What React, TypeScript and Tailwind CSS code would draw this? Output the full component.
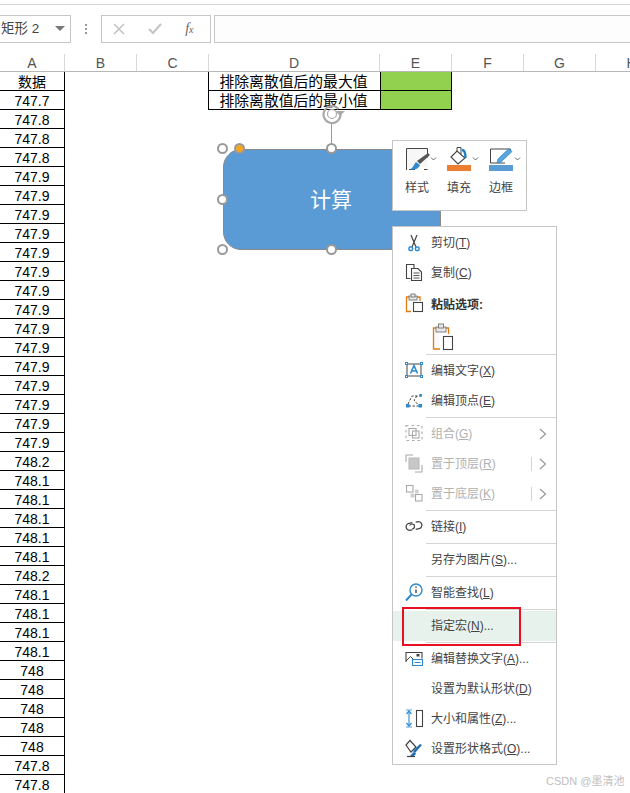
import { ReactNode } from "react";

const font = { cjk: "font-['Liberation_Sans','Noto_Sans_CJK_SC',sans-serif]" };

const values = [
  "747.7", "747.8", "747.8", "747.8",
  "747.9", "747.9", "747.9", "747.9", "747.9", "747.9", "747.9", "747.9",
  "747.9", "747.9", "747.9", "747.9", "747.9", "747.9", "747.9",
  "748.2", "748.1", "748.1", "748.1", "748.1", "748.1", "748.2",
  "748.1", "748.1", "748.1", "748.1",
  "748", "748", "748", "748", "748", "747.8", "747.8",
];

const columns = [
  { name: "A", width: "w-[65px]" },
  { name: "B", width: "w-[72px]" },
  { name: "C", width: "w-[72px]" },
  { name: "D", width: "w-[171px]" },
  { name: "E", width: "w-[72px]" },
  { name: "F", width: "w-[72px]" },
  { name: "G", width: "w-[72px]" },
  { name: "H", width: "w-[72px]" },
];

const Svg = ({ children, w = 24, h = 24 }: { children: ReactNode; w?: number; h?: number }) => (
  <svg width={w} height={h} viewBox={`0 0 ${w} ${h}`} fill="none" className="shrink-0">
    {children}
  </svg>
);

const dark = "#444444";
const blue = "#2f8ad0";
const orange = "#e47911";

const icons: Record<string, ReactNode> = {
  cut: (
    <Svg>
      <path d="M9 4l5 12M15 4l-5 12" stroke={dark} strokeWidth="1.2" />
      <rect x="7" y="16" width="3.5" height="3.5" rx="1" stroke={blue} strokeWidth="1.5" />
      <rect x="13.5" y="16" width="3.5" height="3.5" rx="1" stroke={blue} strokeWidth="1.5" />
    </Svg>
  ),
  copy: (
    <Svg>
      <path d="M8.5 17.5H4.5V3.5H12V7" stroke={dark} strokeWidth="1.1" />
      <path d="M9.5 7.5H16l3.5 3.5v8.5h-10z" fill="#fafafa" stroke={dark} strokeWidth="1.1" />
      <path d="M11.5 12h6M11.5 14.5h6M11.5 17h6" stroke={dark} strokeWidth="0.9" />
    </Svg>
  ),
  paste: (
    <Svg>
      <path d="M9 5H4.5v14.5H9" stroke={orange} strokeWidth="1.3" />
      <path d="M15 5h3v4" stroke={orange} strokeWidth="1.3" />
      <rect x="7" y="4" width="8" height="4" fill="#e8e8e8" stroke="#777" strokeWidth="0.9" />
      <rect x="9" y="2" width="4" height="3" fill="#e8e8e8" stroke="#777" strokeWidth="0.9" />
      <rect x="11.5" y="10.5" width="9" height="9" fill="#fff" stroke={dark} strokeWidth="1.1" />
    </Svg>
  ),
  text: (
    <Svg>
      <rect x="5" y="5" width="14" height="12" fill="#fff" stroke={dark} strokeWidth="1" />
      <g fill="#fff" stroke={blue} strokeWidth="1">
        <rect x="3.5" y="3.5" width="2" height="2" />
        <rect x="18.5" y="3.5" width="2" height="2" />
        <rect x="3.5" y="16.5" width="2" height="2" />
        <rect x="18.5" y="16.5" width="2" height="2" />
      </g>
      <path d="M8.5 14.5l3.5-8 3.5 8M9.7 12h4.6" stroke={blue} strokeWidth="1.6" />
    </Svg>
  ),
  points: (
    <Svg>
      <path d="M6 15l4-8h9M15 7l-3 4 3.5 4M17 17H7" stroke={dark} strokeWidth="1" strokeDasharray="2.5 1.5" />
      <g fill={blue}>
        <rect x="4" y="15" width="3.5" height="3.5" />
        <rect x="17.5" y="5" width="2.5" height="2.5" />
        <rect x="16.5" y="15" width="3.5" height="3.5" />
      </g>
    </Svg>
  ),
  group: (
    <Svg>
      <rect x="4" y="3.5" width="16" height="15" stroke="#aaa" strokeWidth="1.1" strokeDasharray="2.5 3" />
      <rect x="7" y="6.5" width="7" height="7" stroke="#aaa" strokeWidth="1.1" />
      <rect x="10.5" y="9" width="6.5" height="7" stroke="#aaa" strokeWidth="1.1" />
    </Svg>
  ),
  front: (
    <Svg>
      <path d="M4 10V3h7M20 13v7h-7" stroke="#aaa" strokeWidth="1.1" />
      <rect x="7" y="6" width="10" height="11" fill="#c8c8c8" stroke="#b8b8b8" />
    </Svg>
  ),
  back: (
    <Svg>
      <rect x="4.5" y="3.5" width="6.5" height="6.5" stroke="#aaa" strokeWidth="1.1" />
      <rect x="13.5" y="12.5" width="6.5" height="6.5" stroke="#aaa" strokeWidth="1.1" />
      <rect x="8.5" y="11.5" width="4" height="4" fill="#cfcfcf" />
      <rect x="13" y="7.5" width="3.5" height="4" fill="#cfcfcf" />
    </Svg>
  ),
  link: (
    <Svg>
      <path d="M11 8H7.5a3.5 3.5 0 0 0 0 7h2" stroke={dark} strokeWidth="1.3" transform="rotate(-12 9 11)" />
      <path d="M13 14h3.5a3.5 3.5 0 0 0 0-7h-2" stroke={dark} strokeWidth="1.3" transform="rotate(-12 15 11)" />
      <path d="M7.5 10.5c2-2.5 5-1.5 5 .5s-1 3-2.5 3" stroke={dark} strokeWidth="1.2" />
    </Svg>
  ),
  search: (
    <Svg>
      <circle cx="14" cy="9" r="6" fill="#fff" stroke={blue} strokeWidth="1.4" />
      <path d="M9.5 13.5L4 19.5" stroke={blue} strokeWidth="2" />
      <path d="M14 8.5v3.5" stroke={dark} strokeWidth="1.4" />
      <rect x="13.3" y="5.5" width="1.4" height="1.4" fill={dark} />
    </Svg>
  ),
  alt: (
    <Svg>
      <path d="M4 15V5.5h16v6" stroke={dark} strokeWidth="1.1" />
      <path d="M4 14l4.5-4.5L13 14" stroke={dark} strokeWidth="1" />
      <rect x="14.5" y="7" width="3" height="2.5" fill={dark} />
      <rect x="10.5" y="12.5" width="10" height="6" fill="#fff" stroke={blue} strokeWidth="1.1" />
      <path d="M12.5 15.5h6" stroke={blue} />
    </Svg>
  ),
  size: (
    <Svg>
      <path d="M7 5v13" stroke={blue} strokeWidth="1.1" />
      <path d="M4.5 7L7 4l2.5 3M4.5 16L7 19l2.5-3" stroke={blue} strokeWidth="1.2" />
      <path d="M4 3h6M4 20h6" stroke={blue} strokeWidth="0.8" />
      <rect x="14.5" y="3.5" width="6" height="16" stroke={dark} strokeWidth="1.1" />
    </Svg>
  ),
  format: (
    <Svg>
      <path d="M4 8l4-4.5 6 6.5-5 5z" fill="#fff" stroke={dark} strokeWidth="1.2" />
      <path d="M20 8l-7 8-2-2 7-7z" fill="#1f6fb5" />
      <path d="M12 15c-2 .5-2 3-4 3.5 2 1.5 5 .5 6-2z" fill="#1f6fb5" />
      <path d="M5 19.5h8" stroke={dark} strokeWidth="1.2" />
    </Svg>
  ),
};

type MenuRow =
  | { kind: "sep" }
  | {
      kind: "item";
      icon?: string;
      label: string;
      hotkey: string;
      suffix?: string;
      disabled?: boolean;
      sub?: boolean;
      split?: boolean;
      active?: boolean;
    };

const afterPaste: MenuRow[] = [
  { kind: "sep" },
  { kind: "item", icon: "text", label: "编辑文字", hotkey: "X" },
  { kind: "item", icon: "points", label: "编辑顶点", hotkey: "E" },
  { kind: "sep" },
  { kind: "item", icon: "group", label: "组合", hotkey: "G", disabled: true, sub: true },
  { kind: "item", icon: "front", label: "置于顶层", hotkey: "R", disabled: true, sub: true, split: true },
  { kind: "item", icon: "back", label: "置于底层", hotkey: "K", disabled: true, sub: true, split: true },
  { kind: "sep" },
  { kind: "item", icon: "link", label: "链接", hotkey: "I" },
  { kind: "sep" },
  { kind: "item", label: "另存为图片", hotkey: "S", suffix: "..." },
  { kind: "sep" },
  { kind: "item", icon: "search", label: "智能查找", hotkey: "L" },
  { kind: "sep" },
  { kind: "item", label: "指定宏", hotkey: "N", suffix: "...", active: true },
  { kind: "sep" },
  { kind: "item", icon: "alt", label: "编辑替换文字", hotkey: "A", suffix: "..." },
  { kind: "item", label: "设置为默认形状", hotkey: "D" },
  { kind: "item", icon: "size", label: "大小和属性", hotkey: "Z", suffix: "..." },
  { kind: "item", icon: "format", label: "设置形状格式", hotkey: "O", suffix: "..." },
];

const Separator = () => (
  <div className="flex h-[3px] items-center pl-[33px]">
    <div className="h-px w-full bg-[#d4d4d4]" />
  </div>
);

const Row = ({ row }: { row: Extract<MenuRow, { kind: "item" }> }) => (
  <div
    className={`flex h-[30px] items-center pl-[9px] text-[12px] ${
      row.disabled ? "text-[#b1b1b1]" : "text-[#444444]"
    } ${row.active ? "bg-[#e8f2ec]" : ""}`}
  >
    <div className="h-6 w-6 shrink-0">{row.icon ? icons[row.icon] : null}</div>
    <span className="ml-[5px] whitespace-nowrap">
      {row.label}(<span className="underline">{row.hotkey}</span>){row.suffix}
    </span>
    {row.sub && (
      <div className="ml-auto flex items-center">
        {row.split && <div className="mr-[6px] h-[14px] w-px bg-[#d4d4d4]" />}
        <svg width="10" height="12" viewBox="0 0 10 12" fill="none" className="mr-[8px]">
          <path d="M2 1l5.5 5L2 11" stroke="#999" strokeWidth="1.2" />
        </svg>
      </div>
    )}
  </div>
);

const ContextMenu = () => (
  <div className={`absolute left-[392px] top-[226px] w-[165px] border border-[#c6c6c6] bg-white pt-px ${font.cjk}`}>
    <Row row={{ kind: "item", icon: "cut", label: "剪切", hotkey: "T" }} />
    <Row row={{ kind: "item", icon: "copy", label: "复制", hotkey: "C" }} />
    <div className="flex h-[32px] items-center pl-[9px] text-[12px] font-bold text-[#333333]">
      <div className="h-6 w-6 shrink-0">{icons.paste}</div>
      <span className="ml-[5px] pt-[2px]">粘贴选项:</span>
    </div>
    <div className="flex h-[33px] items-center pl-[38px]">
      <svg width="24" height="28" viewBox="0 0 24 28" fill="none">
        <path d="M8 5H2.5v21H9" stroke={orange} strokeWidth="1.3" fill="#fafafa" />
        <path d="M14 5h3.5v6" stroke={orange} strokeWidth="1.3" />
        <rect x="5" y="4" width="10" height="5" fill="#e8e8e8" stroke="#777" strokeWidth="0.9" />
        <rect x="7.5" y="1" width="5" height="4" fill="#e8e8e8" stroke="#777" strokeWidth="0.9" />
        <rect x="12.5" y="13.5" width="9" height="13" fill="#fff" stroke={dark} strokeWidth="1.1" />
      </svg>
    </div>
    {afterPaste.map((row, i) => (row.kind === "sep" ? <Separator key={i} /> : <Row key={i} row={row} />))}
  </div>
);

const MiniToolbar = () => (
  <div className={`absolute left-[392px] top-[140px] flex h-[71px] w-[135px] border border-[#c6c6c6] bg-white px-[3px] pt-[4px] text-[12px] text-[#444444] ${font.cjk}`}>
    <div className="flex w-[42px] flex-col items-center">
      <Svg w={42} h={30}>
        <path d="M10.5 3.5h21V22H16l-5.5 3z" fill="#f7f7f7" />
        <path d="M10.5 25V3.5h21v9M13 24.5h6M28 24.5h3.5" stroke={dark} strokeWidth="1" />
        <path d="M21 16l11-8 2 2-10 9z" fill="#555" />
        <path d="M20 17c-2 2-2 5-6 7.5 4 1 8 0 10-4.5z" fill={blue} />
        <path d="M35 12.5l2.5 2.5 2.5-2.5" stroke="#666" />
      </Svg>
      <span className="mt-[4px]">样式</span>
    </div>
    <div className="flex w-[42px] flex-col items-center">
      <Svg w={42} h={30}>
        <path d="M13 12l6-6 8 7-7 6z" fill="#fff" stroke={dark} strokeWidth="1.1" />
        <path d="M19 7V2.5h4V9" stroke={dark} strokeWidth="1" />
        <path d="M24 5c3 0 3.5 3 3.5 8" stroke="#1f7fc4" strokeWidth="2.4" />
        <rect x="9" y="20" width="24" height="6" fill="#ed7d31" />
        <path d="M35 12.5l2.5 2.5 2.5-2.5" stroke="#666" />
      </Svg>
      <span className="mt-[4px]">填充</span>
    </div>
    <div className="flex w-[42px] flex-col items-center">
      <Svg w={42} h={30}>
        <path d="M25 18H10.5V4h20v3" stroke={dark} strokeWidth="1" />
        <path d="M17 18l1-4L29 3.5l3 3L21 17z" fill="#5aa5dc" stroke={blue} strokeWidth="0.8" />
        <rect x="9" y="20" width="24" height="6" fill="#5b9bd5" />
        <path d="M35 12.5l2.5 2.5 2.5-2.5" stroke="#666" />
      </Svg>
      <span className="mt-[4px]">边框</span>
    </div>
  </div>
);

const Handle = ({ pos, orangeDot }: { pos: string; orangeDot?: boolean }) => (
  <div
    className={`absolute h-[11px] w-[11px] rounded-full border-2 border-[#999999] ${
      orangeDot ? "bg-[#f5a623]" : "bg-white"
    } ${pos}`}
  />
);

const Shape = () => (
  <>
    <div className={`absolute left-[223px] top-[149px] flex h-[101px] w-[218px] items-center justify-center rounded-[18px] border border-[#8a8a8a] bg-[#5b9bd5] text-[21px] text-white ${font.cjk}`}>
      <span className="mr-[2px]">计算</span>
    </div>
    <div className="absolute left-[331px] top-[122px] h-[22px] w-px bg-[#999999]" />
    <svg width="28" height="22" viewBox="0 0 28 22" fill="none" className="absolute left-[320px] top-[103px]">
      <path d="M18.5 6A8.5 8.5 0 1 0 20.5 11" stroke="#aaaaaa" strokeWidth="2.2" />
      <circle cx="12" cy="11" r="4.5" stroke="#aaaaaa" strokeWidth="1.2" />
      <path d="M15.5 8h9.5l-5 5z" fill="#aaaaaa" />
    </svg>
    <Handle pos="left-[217px] top-[143px]" />
    <Handle pos="left-[234px] top-[143px]" orangeDot />
    <Handle pos="left-[326px] top-[143px]" />
    <Handle pos="left-[217px] top-[194px]" />
    <Handle pos="left-[217px] top-[244px]" />
    <Handle pos="left-[326px] top-[244px]" />
  </>
);

export default function App() {
  return (
    <div className={`relative h-[793px] w-[630px] overflow-hidden bg-white ${font.cjk}`}>
      <div className="h-[5px] border-b border-[#d6d6d6]" />

      {/* formula bar */}
      <div className="mt-[10px] flex h-[28px] text-[#444444]">
        <div className="flex w-[71px] items-center overflow-hidden border-y border-r border-[#c6c6c6] pr-[5px]">
          <span className="ml-[-26px] whitespace-nowrap text-[13.5px]">圆角矩形 2</span>
          <svg width="10" height="6" viewBox="0 0 10 6" className="ml-auto">
            <path d="M0 0h10L5 5z" fill="#777777" />
          </svg>
        </div>
        <div className="flex w-[30px] flex-col items-center justify-center gap-[2px]">
          <div className="h-[2px] w-[2px] bg-[#999999]" />
          <div className="h-[2px] w-[2px] bg-[#999999]" />
          <div className="h-[2px] w-[2px] bg-[#999999]" />
        </div>
        <div className="flex w-[110px] items-center justify-around border border-[#c6c6c6] pr-[5px]">
          <svg width="12" height="12" viewBox="0 0 12 12" fill="none">
            <path d="M1 1l10 10M11 1L1 11" stroke="#c4c4c4" strokeWidth="1.6" />
          </svg>
          <svg width="14" height="12" viewBox="0 0 14 12" fill="none">
            <path d="M1 6l4 4 8-9" stroke="#c4c4c4" strokeWidth="2" />
          </svg>
          <span className="font-['Liberation_Serif',serif] text-[14px] italic leading-none text-[#666666]">
            f<span className="text-[10px]">x</span>
          </span>
        </div>
        <div className="ml-[3px] flex-1 border-y border-l border-[#c6c6c6] bg-[#fdfdfd]" />
      </div>

      {/* column headers */}
      <div className="mt-[10px] flex h-[19px] border-b border-[#b8b8b8] pt-px text-[14px] leading-[19px] text-[#555555]">
        {columns.map((c) => (
          <div key={c.name} className={`shrink-0 border-r border-[#d8d8d8] text-center ${c.width}`}>
            {c.name}
          </div>
        ))}
      </div>

      {/* sheet */}
      <div className="flex text-black">
        <div className="w-[65px] shrink-0 border-r border-black">
          {["数据", ...values].map((v, i) => (
            <div key={i} className="h-[19px] border-b border-black pt-px text-center text-[14px] leading-[18px]">
              {v}
            </div>
          ))}
        </div>
        <div className="ml-[143px] flex h-[38px] border-x border-b border-black">
          <div className="w-[171px] text-center text-[14.8px] leading-[18px]">
            <div className="mr-[2px] h-[18px] pt-px">排除离散值后的最大值</div>
            <div className="relative h-px bg-black" />
            <div className="mr-[2px] h-[18px] pt-px">排除离散值后的最小值</div>
          </div>
          <div className="w-[71px] border-l border-black bg-[#92d050]">
            <div className="h-[19px] border-b border-black" />
          </div>
        </div>
      </div>

      <Shape />
      <MiniToolbar />
      <ContextMenu />

      <div className="absolute left-[402px] top-[607px] h-[39px] w-[119px] border-2 border-[#e81123]" />
      <div className="absolute left-[546px] top-[774px] whitespace-nowrap text-[11px] leading-[14px] text-[#c0c0c0]">
        CSDN @墨清池
      </div>
    </div>
  );
}
